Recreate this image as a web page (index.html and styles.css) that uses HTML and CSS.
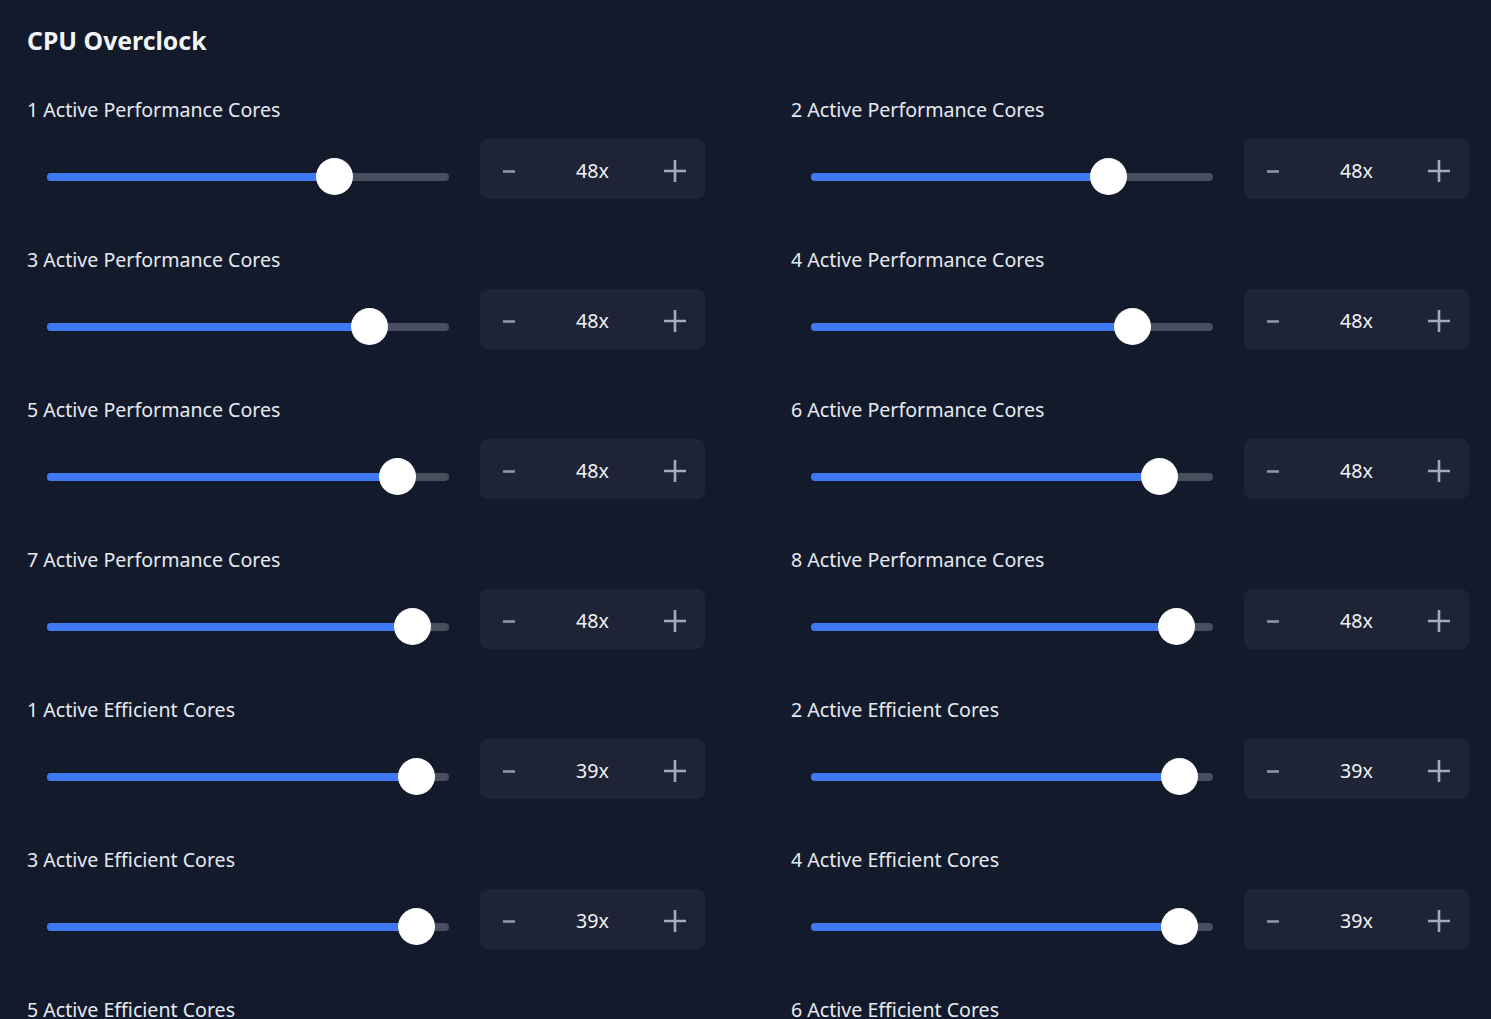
FILE: index.html
```html
<!DOCTYPE html>
<html lang="en">

<head>
    <meta charset="UTF-8">
    <meta name="viewport" content="width=device-width, initial-scale=1.0">
    <title>CPU Overclock</title>
    <link rel="stylesheet" href="styles.css">
</head>

<body>
    <div class="page">
        <h2 class="title">CPU Overclock</h2>
        <div class="grid" id="grid"></div>
    </div>

    <script>
        // Ratio settings per active core count
        const items = [
            { label: '1 Active Performance Cores', value: '48x', pos: 71.4 },
            { label: '2 Active Performance Cores', value: '48x', pos: 73.9 },
            { label: '3 Active Performance Cores', value: '48x', pos: 80.1 },
            { label: '4 Active Performance Cores', value: '48x', pos: 79.9 },
            { label: '5 Active Performance Cores', value: '48x', pos: 87.1 },
            { label: '6 Active Performance Cores', value: '48x', pos: 86.8 },
            { label: '7 Active Performance Cores', value: '48x', pos: 90.8 },
            { label: '8 Active Performance Cores', value: '48x', pos: 90.8 },
            { label: '1 Active Efficient Cores', value: '39x', pos: 91.8 },
            { label: '2 Active Efficient Cores', value: '39x', pos: 91.6 },
            { label: '3 Active Efficient Cores', value: '39x', pos: 91.8 },
            { label: '4 Active Efficient Cores', value: '39x', pos: 91.6 },
            { label: '5 Active Efficient Cores', value: '39x', pos: 91.8 },
            { label: '6 Active Efficient Cores', value: '39x', pos: 91.6 }
        ];

        const grid = document.getElementById('grid');

        items.forEach((item) => {
            const el = document.createElement('div');
            el.classList.add('setting');
            el.innerHTML = `
                <div class="setting-label">${item.label}</div>
                <div class="setting-controls">
                    <div class="slider">
                        <div class="slider-track">
                            <div class="slider-fill" style="width: ${item.pos}%"></div>
                            <div class="slider-thumb" style="left: ${item.pos}%"></div>
                        </div>
                    </div>
                    <div class="stepper">
                        <button class="step-btn minus" type="button">
                            <svg width="14" height="14" viewBox="0 0 14 14"><path d="M1 7.5h12" stroke="currentColor" stroke-width="2.6"/></svg>
                        </button>
                        <span class="step-value">${item.value}</span>
                        <button class="step-btn plus" type="button">
                            <svg width="24" height="24" viewBox="0 0 24 24"><path d="M1 12h22M12 1v22" stroke="currentColor" stroke-width="2.6"/></svg>
                        </button>
                    </div>
                </div>
            `;
            grid.appendChild(el);
        });
    </script>
</body>

</html>
```

FILE: styles.css
```css
body {
    margin: 0;
    background-color: #131a2b;
    color: #e9edf3;
    font-family: "Noto Sans", "Open Sans", sans-serif;
}

.page {
    padding: 24px 22px 40px 27px;
}

.title {
    margin: 0 0 40px;
    font-size: 24.8px;
    line-height: 32px;
    font-weight: 700;
    color: #f2f4f8;
}

.grid {
    display: grid;
    grid-template-columns: 678px 678px;
    column-gap: 86px;
    row-gap: 47px;
}

.setting-label {
    font-size: 19.6px;
    line-height: 28px;
    margin-bottom: 15px;
    color: #e6eaf0;
}

.setting-controls {
    display: flex;
    align-items: center;
    gap: 31px;
    height: 60px;
}

.slider {
    padding-left: 20px;
    width: 402px;
}

.slider-track {
    position: relative;
    height: 8px;
    border-radius: 4px;
    background-color: #4a4f5f;
    margin-top: 15px;
}

.slider-fill {
    height: 100%;
    border-radius: 4px;
    background-color: #3e78f2;
}

.slider-thumb {
    position: absolute;
    top: 50%;
    width: 37px;
    height: 37px;
    margin-left: -18.5px;
    margin-top: -18.5px;
    border-radius: 50%;
    background-color: #fff;
}

.stepper {
    display: flex;
    align-items: center;
    justify-content: space-between;
    width: 225px;
    height: 60px;
    box-sizing: border-box;
    padding: 4px 18px 0 22px;
    background-color: #1e2435;
    border-radius: 8px;
}

.step-btn {
    display: flex;
    align-items: center;
    justify-content: center;
    background: none;
    border: none;
    padding: 0;
    cursor: pointer;
    color: #8e95a5;
}

.step-btn.plus {
    color: #a3aaba;
}

.step-value {
    font-size: 19.6px;
    color: #f1f3f7;
    padding-left: 6px;
    margin-top: -2px;
}
```
